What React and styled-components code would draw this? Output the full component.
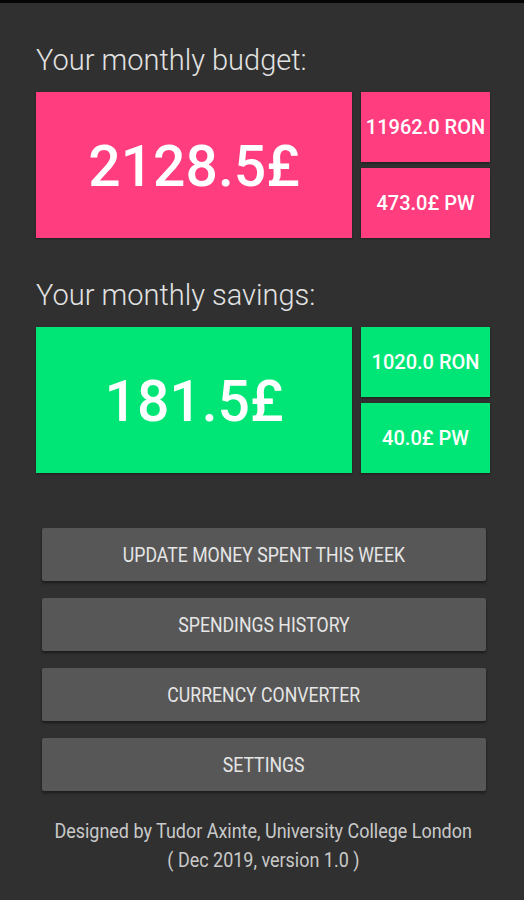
import React from 'react';
import styled, { createGlobalStyle } from 'styled-components';

const GlobalStyle = createGlobalStyle`
  html, body {
    margin: 0;
    padding: 0;
    background: #303030;
  }
  body {
    font-family: Roboto, "Noto Sans", "Liberation Sans", sans-serif;
  }
`;

const Screen = styled.div`
  min-height: 900px;
  box-sizing: border-box;
  border-top: 3px solid #050505;
  background: #303030;
  padding: 40px 34px 0 36px;
  display: flex;
  flex-direction: column;
`;

const Heading = styled.h2`
  margin: 0 0 15px;
  font-size: 29px;
  line-height: 34px;
  font-weight: 300;
  color: #e2e2e2;
  margin-top: ${(p) => p.$top || 0}px;
`;

const Grid = styled.div`
  display: grid;
  grid-template-columns: 1fr 129px;
  grid-template-rows: 70px 70px;
  gap: 6px 9px;
  height: 146px;
`;

const Tile = styled.div`
  background: ${(p) => p.$color};
  color: #ffffff;
  display: flex;
  align-items: center;
  justify-content: center;
  font-size: 20px;
  font-weight: 500;
  box-shadow: 0 1px 2px rgba(0, 0, 0, 0.35);
`;

const MainTile = styled(Tile)`
  grid-row: 1 / span 2;
  font-size: 57px;
  font-weight: 500;
  padding-top: 2px;
`;

const Buttons = styled.div`
  display: flex;
  flex-direction: column;
  gap: 17px;
  margin: 55px 4px 0 6px;
`;

const Button = styled.button`
  height: 53px;
  border: none;
  border-radius: 2px;
  background: #575757;
  color: #e6e6e6;
  font-family: Roboto, "Noto Sans", "Liberation Sans", sans-serif;
  font-size: 21px;
  font-weight: 400;
  text-transform: uppercase;
  box-shadow: 0 2px 3px rgba(0, 0, 0, 0.45);
  cursor: pointer;
  padding: 0;
`;

// the screenshot's small text is horizontally narrowed
const Squeezed = styled.span`
  display: inline-block;
  white-space: nowrap;
  transform: scaleX(${(p) => p.$x});
`;

const Footer = styled.div`
  margin-top: 26px;
  display: flex;
  flex-direction: column;
  align-items: center;
  color: #c9c9c9;
  font-size: 21px;
  line-height: 29px;
`;

function Summary({ title, top, color, main, local, weekly }) {
  return (
    <section>
      <Heading $top={top}>{title}</Heading>
      <Grid>
        <MainTile $color={color}>{main}</MainTile>
        <Tile $color={color}>{local}</Tile>
        <Tile $color={color}>{weekly}</Tile>
      </Grid>
    </section>
  );
}

export default function App() {
  const actions = [
    'Update money spent this week',
    'Spendings history',
    'Currency converter',
    'Settings',
  ];

  return (
    <>
      <GlobalStyle />
      <Screen>
        <Summary
          title="Your monthly budget:"
          color="#ff3d7f"
          main="2128.5£"
          local="11962.0 RON"
          weekly="473.0£ PW"
        />
        <Summary
          title="Your monthly savings:"
          top={40}
          color="#00e676"
          main="181.5£"
          local="1020.0 RON"
          weekly="40.0£ PW"
        />
        <Buttons>
          {actions.map((a) => (
            <Button key={a}>
              <Squeezed $x={0.84}>{a}</Squeezed>
            </Button>
          ))}
        </Buttons>
        <Footer>
          <Squeezed $x={0.855}>Designed by Tudor Axinte, University College London</Squeezed>
          <Squeezed $x={0.855}>( Dec 2019, version 1.0 )</Squeezed>
        </Footer>
      </Screen>
    </>
  );
}
